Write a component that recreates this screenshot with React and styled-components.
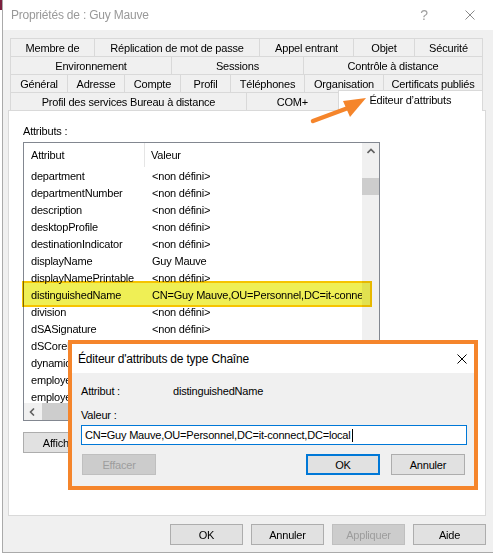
import styled, { createGlobalStyle } from "styled-components";

const GlobalStyle = createGlobalStyle`
  html, body {
    margin: 0;
    padding: 0;
    background: #ffffff;
  }
  body {
    font-family: "Liberation Sans", Arial, sans-serif;
    font-size: 11px;
    letter-spacing: -0.2px;
    color: #000;
  }
  * {
    box-sizing: border-box;
  }
`;

const Page = styled.div`
  position: relative;
  width: 493px;
  height: 554px;
  padding-left: 2px;
  overflow: hidden;
`;

const BehindEdge = styled.div`
  position: absolute;
  left: 0;
  top: 0;
  width: 2px;
  height: 10px;
  background: #7b1f3e;
`;

const Window = styled.div`
  position: relative;
  width: 491px;
  height: 553px;
  display: flex;
  flex-direction: column;
  background: #f0f0f0;
  border-left: 1px solid #aaaaaa;
  border-bottom: 1px solid #aaaaaa;
`;

const TitleBar = styled.div`
  display: flex;
  align-items: center;
  height: ${(p) => p.$h || 30}px;
  padding-left: ${(p) => p.$pad || 8}px;
  background: #ffffff;
  flex-shrink: 0;
`;

const TitleText = styled.div`
  flex: 1;
  font-size: 12px;
  color: ${(p) => (p.$inactive ? "#999999" : "#000000")};
`;

const TitleButton = styled.div`
  width: ${(p) => p.$w || 46}px;
  height: 100%;
  display: flex;
  align-items: center;
  justify-content: center;
  font-size: 14px;
  color: #a0a0a0;
`;

const Body = styled.div`
  display: flex;
  flex-direction: column;
  padding: 8px 7px 0 5px;
`;

const TabRows = styled.div`
  margin-left: 2px;
  width: 473px;
`;

const TabRow = styled.div`
  display: flex;
  height: 18px;
`;

const Tab = styled.div`
  width: ${(p) => p.$w}px;
  height: 18px;
  display: flex;
  align-items: center;
  justify-content: center;
  white-space: nowrap;
  border: 0 solid #d9d9d9;
  border-width: 1px 0 0 1px;
  &:last-child {
    border-right-width: 1px;
  }
`;

const ActiveTab = styled(Tab)`
  position: relative;
  z-index: 2;
  height: 21px;
  margin-top: -2px;
  background: #ffffff;
  border-width: 1px 1px 0 1px;
  padding-bottom: 2px;
`;

const Panel = styled.div`
  position: relative;
  z-index: 1;
  width: 478px;
  height: 406px;
  background: #ffffff;
  border: 1px solid #d9d9d9;
  padding: 13px 0 0 14px;
`;

const Label = styled.div`
  line-height: 15px;
  height: 15px;
`;

const ListBox = styled.div`
  margin-top: 3px;
  width: 357px;
  height: 279px;
  border: 1px solid #828790;
  display: grid;
  grid-template-columns: 338px 17px;
  grid-template-rows: 260px 17px;
`;

const ListContent = styled.div`
  overflow: hidden;
`;

const HeaderRow = styled.div`
  display: flex;
  height: 24px;
  align-items: stretch;
`;

const HeaderCell = styled.div`
  display: flex;
  align-items: center;
  width: ${(p) => (p.$w ? `${p.$w}px` : "auto")};
  padding-left: ${(p) => p.$pl || 7}px;
  border-right: ${(p) => (p.$divider ? "1px solid #e5e5e5" : "none")};
`;

const ListRow = styled.div`
  display: flex;
  height: 17px;
  align-items: center;
  white-space: nowrap;
`;

const Cell = styled.div`
  flex-shrink: 0;
  width: ${(p) => (p.$w ? `${p.$w}px` : "auto")};
  padding-left: 7px;
`;

const VScroll = styled.div`
  background: #f0f0f0;
  display: flex;
  flex-direction: column;
`;

const HScroll = styled.div`
  background: #f0f0f0;
  display: flex;
`;

const ScrollArrow = styled.div`
  width: 17px;
  height: 17px;
  flex-shrink: 0;
  display: flex;
  align-items: center;
  justify-content: center;
`;

const Thumb = styled.div`
  background: #cdcdcd;
  width: ${(p) => (p.$horizontal ? "150px" : "100%")};
  height: ${(p) => (p.$horizontal ? "100%" : "17px")};
  margin-top: ${(p) => (p.$horizontal ? 0 : 18)}px;
  margin-left: ${(p) => (p.$horizontal ? 1 : 0)}px;
`;

const Corner = styled.div`
  background: #f0f0f0;
`;

const Button = styled.div`
  width: ${(p) => p.$w || 73}px;
  height: 21px;
  display: flex;
  align-items: center;
  justify-content: center;
  flex-shrink: 0;
  background: ${(p) => (p.$disabled ? "#cccccc" : "#e1e1e1")};
  color: ${(p) => (p.$disabled ? "#9d9d9d" : "#000000")};
  border: ${(p) =>
    p.$default ? "2px solid #0078d7" : p.$disabled ? "1px solid #bfbfbf" : "1px solid #adadad"};
`;

const ShowButton = styled(Button)`
  margin-top: 11px;
`;

const Footer = styled.div`
  display: flex;
  justify-content: flex-end;
  gap: 8px;
  margin-top: 8px;
`;

/* annotation box drawn over the selected row; multiply keeps the text dark */
const Highlight = styled.div`
  position: absolute;
  left: 19px;
  top: 281px;
  width: 350px;
  height: 26px;
  border: 2px solid #f6c400;
  background: #efef55;
  mix-blend-mode: multiply;
  z-index: 3;
`;

const Arrow = styled.svg`
  position: absolute;
  left: 302px;
  top: 88px;
  z-index: 4;
`;

const Dialog = styled.div`
  position: absolute;
  left: 65px;
  top: 340px;
  width: 410px;
  height: 150px;
  z-index: 5;
  display: flex;
  flex-direction: column;
  background: #f0f0f0;
  border: 4px solid #f5852b;
`;

const DialogBody = styled.div`
  padding: 11px 9px 0 9px;
  display: flex;
  flex-direction: column;
`;

const FieldRow = styled.div`
  display: flex;
  line-height: 15px;
  margin-top: ${(p) => p.$mt || 0}px;
`;

const FieldLabel = styled.div`
  width: 92px;
`;

const TextField = styled.div`
  margin-top: 2px;
  width: 386px;
  height: 20px;
  background: #ffffff;
  border: 1px solid #0078d7;
  padding-left: 3px;
  display: flex;
  align-items: center;
  white-space: nowrap;
`;

const Caret = styled.span`
  display: inline-block;
  width: 1px;
  height: 13px;
  background: #000;
  margin-left: 1px;
`;

const DialogButtons = styled.div`
  display: flex;
  margin-top: 9px;
  gap: 11px;
  padding-left: 1px;
`;

const Spacer = styled.div`
  flex: 1;
`;

const tabRows = [
  [
    ["Membre de", 84],
    ["Réplication de mot de passe", 165],
    ["Appel entrant", 94],
    ["Objet", 61],
    ["Sécurité", 69],
  ],
  [
    ["Environnement", 161],
    ["Sessions", 132],
    ["Contrôle à distance", 180],
  ],
  [
    ["Général", 57],
    ["Adresse", 57],
    ["Compte", 56],
    ["Profil", 50],
    ["Téléphones", 74],
    ["Organisation", 79],
    ["Certificats publiés", 100],
  ],
];

const ND = "<non défini>";

const attributes = [
  ["department", ND],
  ["departmentNumber", ND],
  ["description", ND],
  ["desktopProfile", ND],
  ["destinationIndicator", ND],
  ["displayName", "Guy Mauve"],
  ["displayNamePrintable", ND],
  ["distinguishedName", "CN=Guy Mauve,OU=Personnel,DC=it-connect,DC=local"],
  ["division", ND],
  ["dSASignature", ND],
  ["dSCorePropagationData", "0x0 = ( )"],
  ["dynamicLDAPServer", ND],
  ["employeeID", ND],
  ["employeeNumber", ND],
];

function CloseIcon({ color }) {
  return (
    <svg width="10" height="10" viewBox="0 0 10 10">
      <path d="M0.5 0.5 L9.5 9.5 M9.5 0.5 L0.5 9.5" stroke={color} strokeWidth="1" fill="none" />
    </svg>
  );
}

function Chevron({ dir }) {
  const d = dir === "up" ? "M0.5 5 L4 1.5 L7.5 5" : "M5 0.5 L1.5 4 L5 7.5";
  return (
    <svg width="8" height="8" viewBox="0 0 8 8">
      <path d={d} stroke="#606060" strokeWidth="1.6" fill="none" />
    </svg>
  );
}

export default function App() {
  return (
    <>
      <GlobalStyle />
      <Page>
        <BehindEdge />
        <Window>
          <TitleBar>
            <TitleText $inactive>Propriétés de : Guy Mauve</TitleText>
            <TitleButton>?</TitleButton>
            <TitleButton>
              <CloseIcon color="#8a8a8a" />
            </TitleButton>
          </TitleBar>

          <Body>
            <TabRows>
              {tabRows.map((row, i) => (
                <TabRow key={i}>
                  {row.map(([label, w]) => (
                    <Tab key={label} $w={w}>
                      {label}
                    </Tab>
                  ))}
                </TabRow>
              ))}
              <TabRow>
                <Tab $w={237}>Profil des services Bureau à distance</Tab>
                <Tab $w={92}>COM+</Tab>
                <ActiveTab $w={146}>Éditeur d’attributs</ActiveTab>
              </TabRow>
            </TabRows>

            <Panel>
              <Label>Attributs :</Label>
              <ListBox>
                <ListContent>
                  <HeaderRow>
                    <HeaderCell $w={121} $divider>
                      Attribut
                    </HeaderCell>
                    <HeaderCell $pl={6}>Valeur</HeaderCell>
                  </HeaderRow>
                  {attributes.map(([name, value]) => (
                    <ListRow key={name}>
                      <Cell $w={121}>{name}</Cell>
                      <Cell>{value}</Cell>
                    </ListRow>
                  ))}
                </ListContent>
                <VScroll>
                  <ScrollArrow>
                    <Chevron dir="up" />
                  </ScrollArrow>
                  <Thumb />
                </VScroll>
                <HScroll>
                  <ScrollArrow>
                    <Chevron dir="left" />
                  </ScrollArrow>
                  <Thumb $horizontal />
                </HScroll>
                <Corner />
              </ListBox>
              <ShowButton $w={75}>Afficher</ShowButton>
            </Panel>

            <Footer>
              <Button>OK</Button>
              <Button>Annuler</Button>
              <Button $disabled>Appliquer</Button>
              <Button>Aide</Button>
            </Footer>
          </Body>

          <Highlight />

          <Arrow width="70" height="40" viewBox="0 0 70 40">
            <line x1="8" y1="33" x2="43" y2="20" stroke="#f5852b" strokeWidth="4.5" strokeLinecap="round" />
            <polygon points="61,10 38,13 45,29" fill="#f5852b" />
          </Arrow>

          <Dialog>
            <TitleBar $h={29} $pad={6}>
              <TitleText>Éditeur d'attributs de type Chaîne</TitleText>
              <TitleButton $w={24}>
                <CloseIcon color="#000000" />
              </TitleButton>
            </TitleBar>
            <DialogBody>
              <FieldRow>
                <FieldLabel>Attribut :</FieldLabel>
                <div>distinguishedName</div>
              </FieldRow>
              <FieldRow $mt={9}>
                <FieldLabel>Valeur :</FieldLabel>
              </FieldRow>
              <TextField>
                CN=Guy Mauve,OU=Personnel,DC=it-connect,DC=local
                <Caret />
              </TextField>
              <DialogButtons>
                <Button $w={74} $disabled>
                  Effacer
                </Button>
                <Spacer />
                <Button $w={74} $default>
                  OK
                </Button>
                <Button $w={74}>Annuler</Button>
              </DialogButtons>
            </DialogBody>
          </Dialog>
        </Window>
      </Page>
    </>
  );
}
